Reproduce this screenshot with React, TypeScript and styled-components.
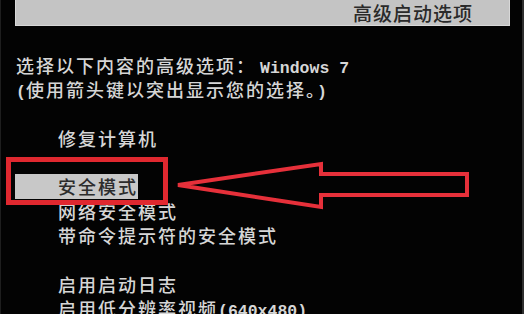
import styled, { createGlobalStyle } from "styled-components";

const GlobalStyle = createGlobalStyle`
  html, body {
    margin: 0;
    padding: 0;
    background: #000;
  }
`;

const Screen = styled.div`
  position: relative;
  width: 524px;
  height: 314px;
  overflow: hidden;
  background: #030303;
  box-sizing: border-box;
  border-left: 1px solid #1e1e1e;
  border-right: 2px solid #2e2e2e;
  font-family: "Noto Sans CJK SC", "DejaVu Sans", sans-serif;
`;

const HeaderBar = styled.div`
  margin-left: 14px;
  width: 495px;
  height: 26px;
  box-sizing: border-box;
  background: #c4c4c4;
  border: 1px solid #d8d8d8;
  border-top: none;
  display: flex;
  align-items: center;
  justify-content: flex-end;
  padding-right: 36px;
  color: #2a2a2a;
  font-size: 19px;
  font-weight: 500;
  letter-spacing: 1px;
`;

const Body = styled.div`
  padding-top: 27px;
  display: flex;
  flex-direction: column;
  align-items: flex-start;
`;

const Line = styled.div<{ $indent?: boolean; $selected?: boolean }>`
  height: 24.3px;
  line-height: 24.3px;
  font-size: 18px;
  font-weight: 500;
  letter-spacing: 2px;
  white-space: nowrap;
  color: ${(p) => (p.$selected ? "#2c2c2c" : "#d6d6d6")};
  background: ${(p) => (p.$selected ? "#c8c8c8" : "transparent")};
  margin-left: ${(p) => (p.$selected ? "14px" : "15px")};
  padding-left: ${(p) => (p.$selected ? "43px" : p.$indent ? "42px" : "0")};
`;

const Blank = styled.div`
  height: 24.3px;
`;

const Mono = styled.span<{ $gap?: boolean }>`
  font-family: "Liberation Mono", "DejaVu Sans Mono", monospace;
  font-size: 16.5px;
  font-weight: 700;
  letter-spacing: 0;
  margin-left: ${(p) => (p.$gap ? "4px" : "0")};
`;

const Highlight = styled.div`
  position: absolute;
  left: 5px;
  top: 157px;
  width: 162px;
  height: 48px;
  box-sizing: border-box;
  border: 5px solid #e0282f;
`;

const ArrowSvg = styled.svg`
  position: absolute;
  left: 0;
  top: 0;
`;

function Arrow() {
  return (
    <ArrowSvg width={524} height={314} viewBox="0 0 524 314">
      <polygon
        points="177,185 320,164 320,174 466,174 466,195 320,195 320,207"
        fill="none"
        stroke="#e6303a"
        strokeWidth={4}
        strokeLinejoin="miter"
      />
    </ArrowSvg>
  );
}

export default function App() {
  return (
    <>
      <GlobalStyle />
      <Screen>
        <HeaderBar>高级启动选项</HeaderBar>
        <Body>
          <Line>
            选择以下内容的高级选项：<Mono $gap>Windows 7</Mono>
          </Line>
          <Line>
            <Mono>(</Mono>使用箭头键以突出显示您的选择。<Mono>)</Mono>
          </Line>
          <Blank />
          <Line $indent>修复计算机</Line>
          <Blank />
          <Line $selected>安全模式</Line>
          <Line $indent>网络安全模式</Line>
          <Line $indent>带命令提示符的安全模式</Line>
          <Blank />
          <Line $indent>启用启动日志</Line>
          <Line $indent>
            启用低分辨率视频<Mono>(640x480)</Mono>
          </Line>
        </Body>
        <Highlight />
        <Arrow />
      </Screen>
    </>
  );
}
